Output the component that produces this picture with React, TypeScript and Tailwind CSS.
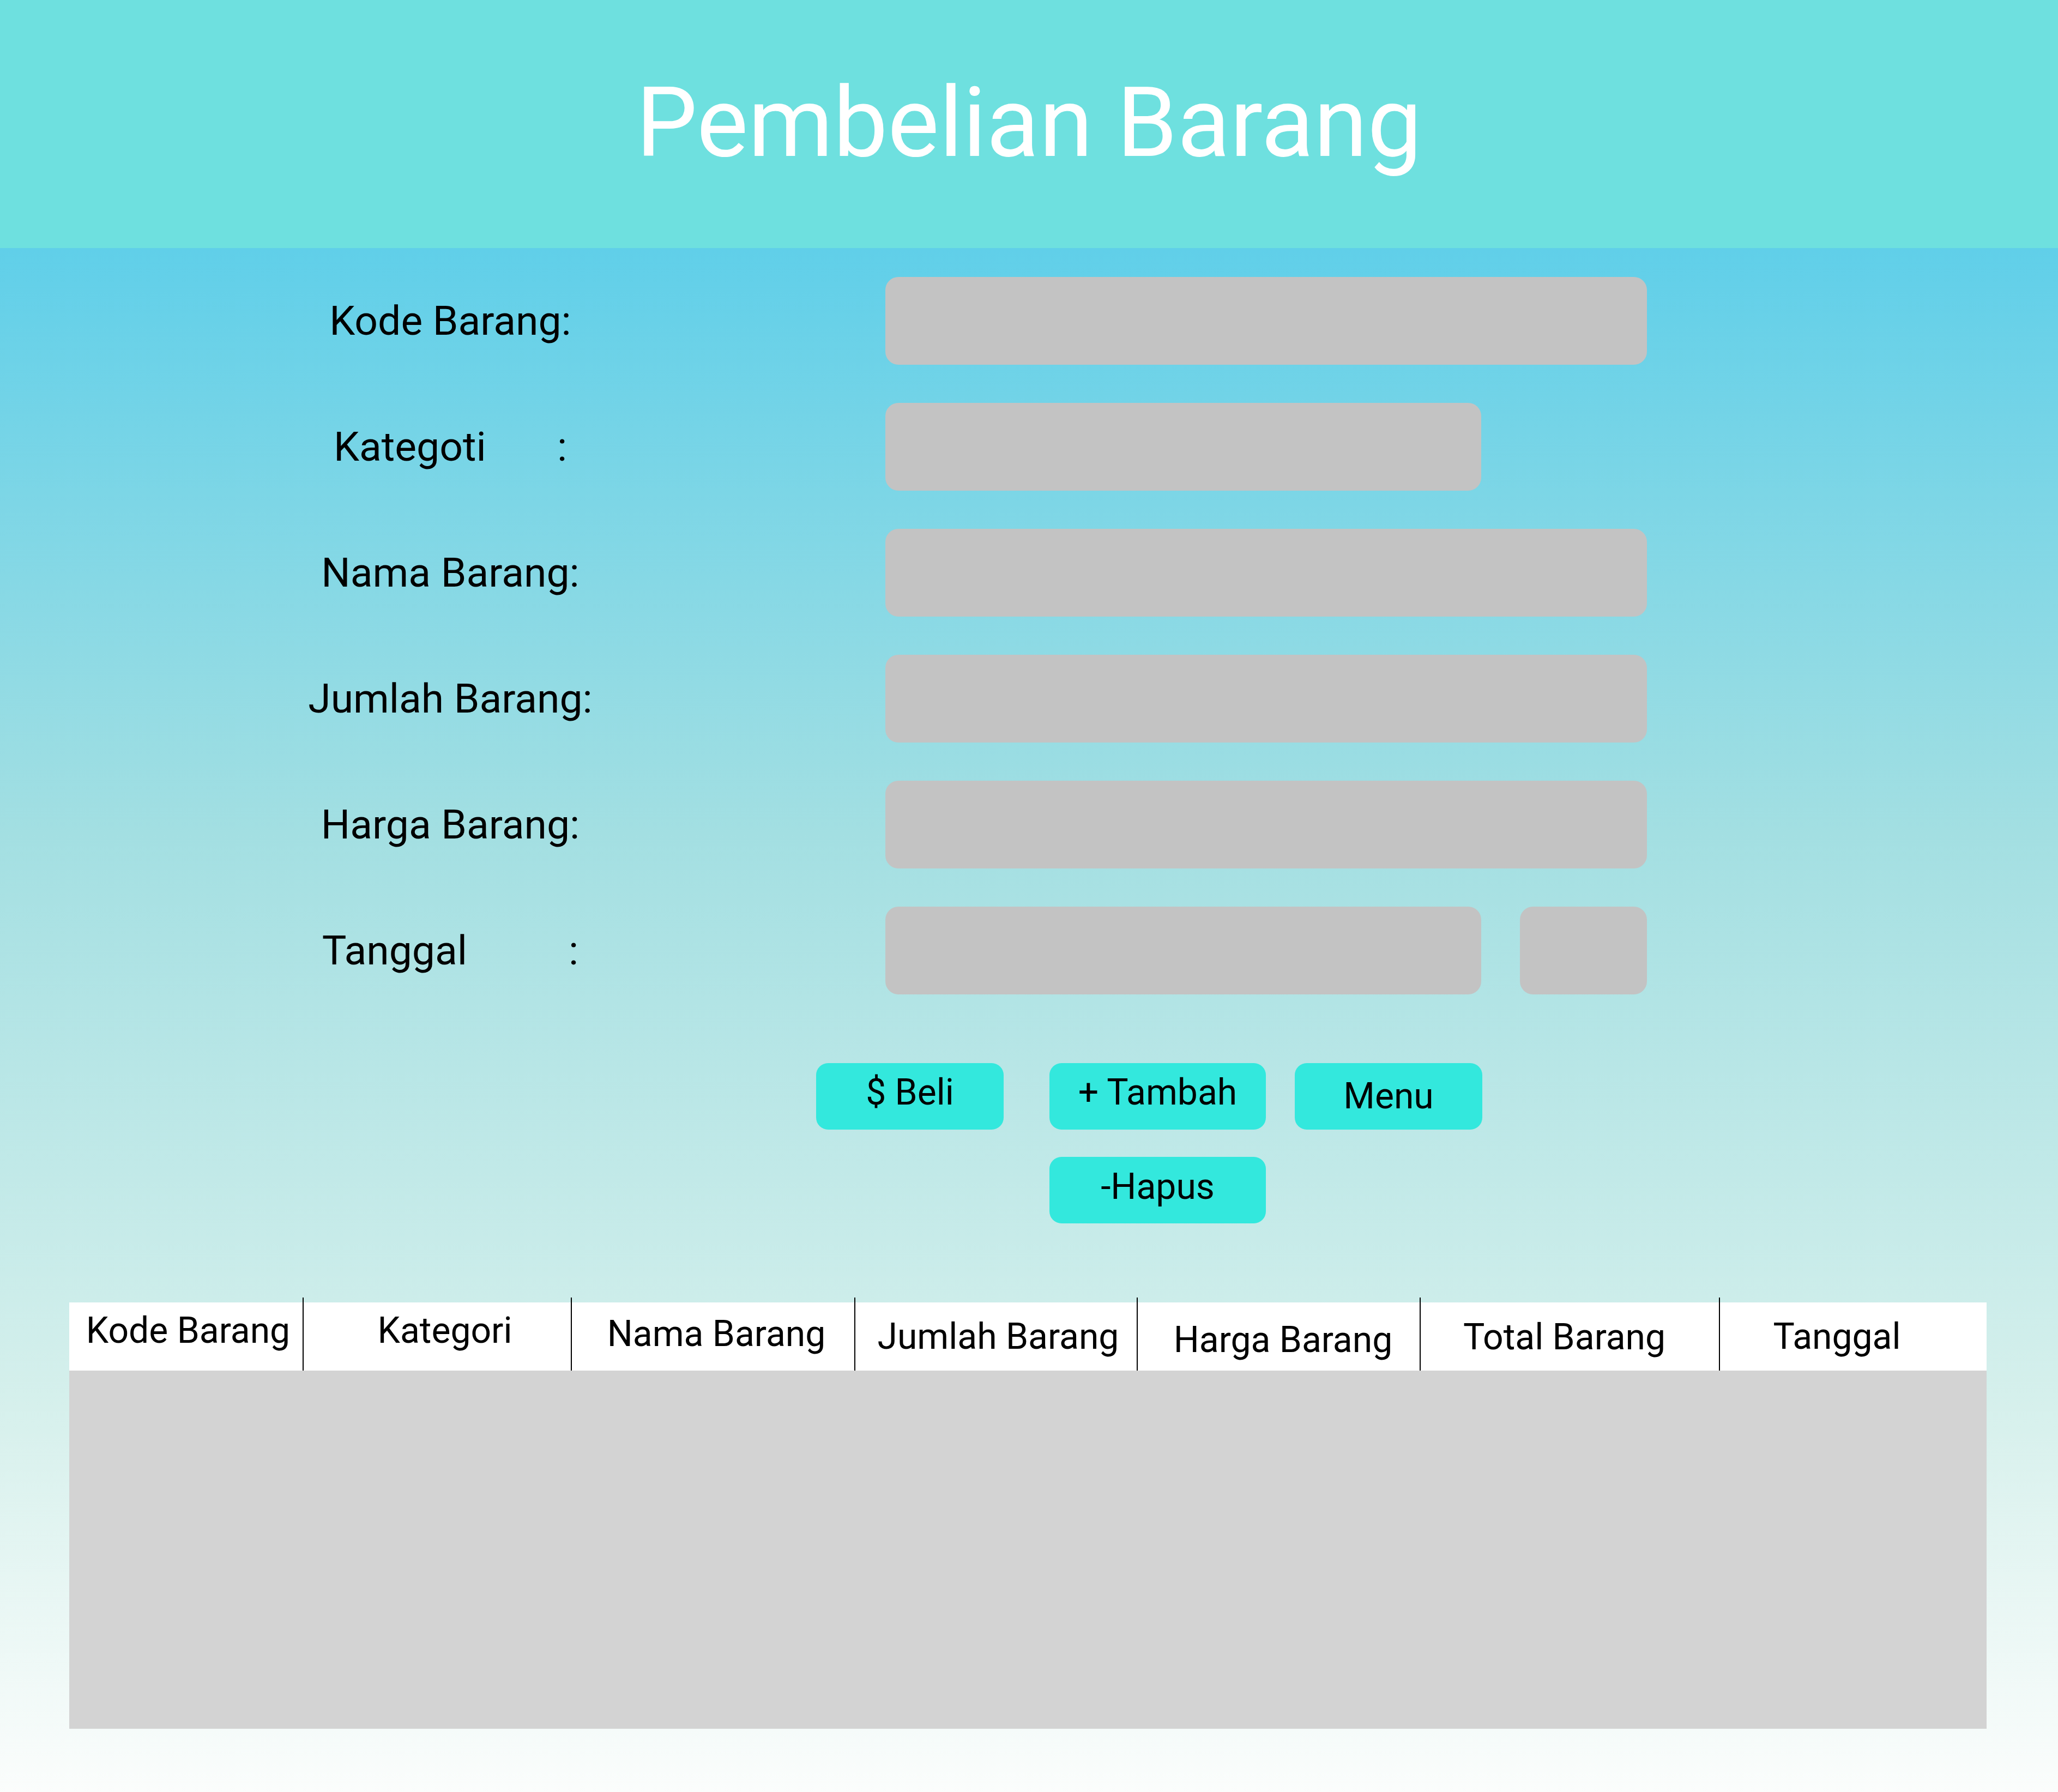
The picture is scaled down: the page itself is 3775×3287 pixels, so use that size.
const fields = [
  { label: 'Kode Barang:', width: 'w-[1397px]' },
  { label: 'Kategoti       :', width: 'w-[1093px]' },
  { label: 'Nama Barang:', width: 'w-[1397px]' },
  { label: 'Jumlah Barang:', width: 'w-[1397px]' },
  { label: 'Harga Barang:', width: 'w-[1397px]' },
];

const columns = [
  { title: 'Kode Barang', className: 'w-[428px] pl-[8px] pb-[12px]' },
  { title: 'Kategori', className: 'w-[492px] border-l-2 border-black pl-[28px] pb-[12px]' },
  { title: 'Nama Barang', className: 'w-[520px] border-l-2 border-black pl-[12px]' },
  { title: 'Jumlah Barang', className: 'w-[518px] border-l-2 border-black pl-[8px] pt-[10px]' },
  { title: 'Harga Barang', className: 'w-[519px] border-l-2 border-black pl-[16px] pt-[22px]' },
  { title: 'Total Barang', className: 'w-[549px] border-l-2 border-black pr-[20px] pt-[12px]' },
  { title: 'Tanggal', className: 'w-[491px] border-l-2 border-black pr-[60px] pt-[10px]' },
];

function FieldLabel({ text }: { text: string }) {
  return (
    <div className="pl-[28px] text-center text-[75px] leading-none whitespace-pre">
      {text}
    </div>
  );
}

export default function App() {
  return (
    <div className="flex min-h-[3287px] w-full flex-col font-[Roboto,sans-serif] text-black">
      {/* Header */}
      <header className="flex h-[455px] items-center justify-center bg-[#6ee0df] pb-[6px]">
        <h1 className="text-[178px] leading-none font-normal text-white">Pembelian Barang</h1>
      </header>

      <main className="flex-1 bg-[linear-gradient(180deg,#60cfe9_0%,#a3dfe2_38%,#d6f0ec_75%,#fbfdfc_100%)] pt-[53px] pb-[116px]">
        {/* Form */}
        <div className="flex flex-col gap-[70px]">
          {fields.map((f) => (
            <div key={f.label} className="grid h-[161px] grid-cols-[1624px_1fr] items-center">
              <FieldLabel text={f.label} />
              <div className={`h-[161px] rounded-[24px] bg-[#c3c3c3] ${f.width}`} />
            </div>
          ))}
          <div className="grid h-[161px] grid-cols-[1624px_1fr] items-center">
            <FieldLabel text={'Tanggal          :'} />
            <div className="flex gap-[71px]">
              <div className="h-[161px] w-[1093px] rounded-[24px] bg-[#c3c3c3]" />
              <div className="h-[161px] w-[233px] rounded-[24px] bg-[#c3c3c3]" />
            </div>
          </div>
        </div>

        {/* Buttons */}
        <div className="mt-[126px] ml-[1497px] flex flex-col gap-[50px]">
          <div className="flex">
            <button className="flex h-[122px] w-[344px] items-center justify-center rounded-[22px] bg-[#33e8dd] pb-[14px] text-[66px] leading-none">
              $ Beli
            </button>
            <button className="ml-[84px] flex h-[122px] w-[397px] items-center justify-center rounded-[22px] bg-[#33e8dd] pb-[14px] text-[66px] leading-none">
              + Tambah
            </button>
            <button className="ml-[53px] flex h-[122px] w-[344px] items-center justify-center rounded-[22px] bg-[#33e8dd] text-[66px] leading-none">
              Menu
            </button>
          </div>
          <div className="flex">
            <button className="ml-[428px] flex h-[122px] w-[397px] items-center justify-center rounded-[22px] bg-[#33e8dd] pb-[12px] text-[66px] leading-none">
              -Hapus
            </button>
          </div>
        </div>

        {/* Table */}
        <div className="mt-[136px] ml-[127px] w-[3517px]">
          <div className="flex h-[134px] bg-[linear-gradient(to_bottom,transparent_9px,#ffffff_9px)]">
            {columns.map((c) => (
              <div key={c.title} className={`flex h-full items-center justify-center text-[66px] leading-none whitespace-nowrap ${c.className}`}>
                {c.title}
              </div>
            ))}
          </div>
          <div className="h-[657px] bg-[#d3d3d3]" />
        </div>
      </main>
    </div>
  );
}
